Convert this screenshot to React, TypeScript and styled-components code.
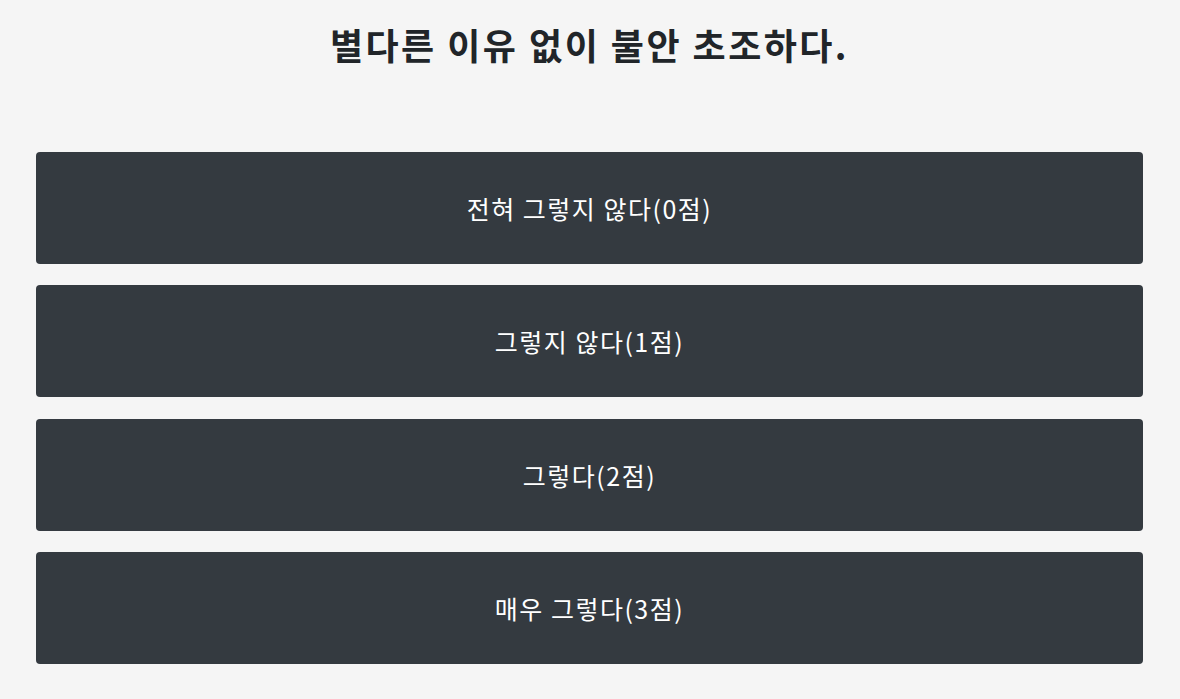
import React from "react";
import styled, { createGlobalStyle } from "styled-components";

const Global = createGlobalStyle`
  html, body { margin: 0; padding: 0; background: #f5f5f5; }
  body { font-family: "Noto Sans CJK KR", "Noto Sans", sans-serif; }
`;

const Page = styled.div`
  display: flex;
  flex-direction: column;
  padding: 18px 37px 0 36px;
`;

const Title = styled.h1`
  margin: 0;
  text-align: center;
  font-size: 36px;
  letter-spacing: 2.45px;
  font-weight: 700;
  color: #212529;
  line-height: 52px;
`;

const Options = styled.div`
  display: flex;
  flex-direction: column;
  gap: 21.33px;
  margin-top: 82px;
`;

const Option = styled.button`
  height: 112px;
  border: none;
  border-radius: 4px;
  background: #343a40;
  color: #ffffff;
  font-family: "Noto Sans CJK KR", "Noto Sans", sans-serif;
  font-size: 25px;
  letter-spacing: 1.5px;
  font-weight: 400;
  cursor: pointer;
  display: flex;
  align-items: center;
  justify-content: center;
`;

const options = ["전혀 그렇지 않다(0점)", "그렇지 않다(1점)", "그렇다(2점)", "매우 그렇다(3점)"];

export default function App() {
  return (
    <>
      <Global />
      <Page>
        <Title>별다른 이유 없이 불안 초조하다.</Title>
        <Options>
          {options.map((o) => (
            <Option key={o}>{o}</Option>
          ))}
        </Options>
      </Page>
    </>
  );
}
